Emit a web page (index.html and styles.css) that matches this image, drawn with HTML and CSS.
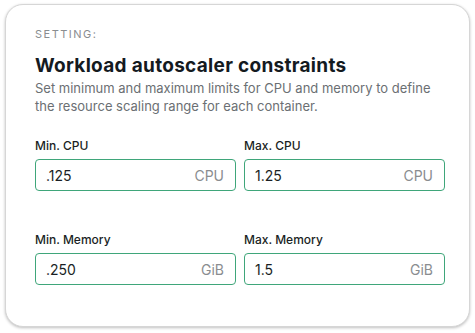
FILE: index.html
```html
<!DOCTYPE html>
<html lang="en">
<head>
    <meta charset="UTF-8">
    <title>Workload autoscaler constraints</title>
    <link rel="stylesheet" href="styles.css">
</head>
<body>
    <div class="card">
        <div class="eyebrow">SETTING:</div>
        <div class="title">Workload autoscaler constraints</div>
        <div class="desc">Set minimum and maximum limits for CPU and memory to define the resource scaling range for each container.</div>

        <div class="fields">
            <div class="field">
                <label class="label">Min. CPU</label>
                <div class="input"><span class="value">.125</span><span class="unit">CPU</span></div>
            </div>
            <div class="field">
                <label class="label">Max. CPU</label>
                <div class="input"><span class="value">1.25</span><span class="unit">CPU</span></div>
            </div>
            <div class="field">
                <label class="label">Min. Memory</label>
                <div class="input"><span class="value">.250</span><span class="unit">GiB</span></div>
            </div>
            <div class="field">
                <label class="label">Max. Memory</label>
                <div class="input"><span class="value">1.5</span><span class="unit">GiB</span></div>
            </div>
        </div>
    </div>
</body>
</html>
```

FILE: styles.css
```css
body {
    margin: 0;
    background: #ffffff;
    font-family: 'Inter', 'Noto Sans', sans-serif;
    color: #1a1f24;
}
.card {
    margin: 4px 5px;
    width: 465px;
    height: 323px;
    box-sizing: border-box;
    padding: 21px 29px;
    border: 1px solid #d6d6d6;
    border-radius: 18px;
    box-shadow: 0 1px 3px rgba(0, 0, 0, 0.25);
    background: #ffffff;
}
.eyebrow {
    font-size: 11px;
    letter-spacing: 1.5px;
    color: #8a8d90;
    line-height: 16px;
}
.title {
    margin-top: 12px;
    font-size: 19px;
    letter-spacing: 0.3px;
    font-weight: 700;
    line-height: 24px;
    color: #141a1f;
}
.desc {
    margin-top: 1px;
    font-size: 13px;
    line-height: 18px;
    color: #6b6f73;
}
.fields {
    margin-top: 23px;
    display: grid;
    grid-template-columns: 201px 201px;
    column-gap: 8px;
    row-gap: 41px;
}
.field {
    display: flex;
    flex-direction: column;
}
.label {
    font-size: 12px;
    line-height: 16px;
    font-weight: 500;
    margin-bottom: 5px;
}
.input {
    height: 32px;
    box-sizing: border-box;
    border: 1px solid #3fa67a;
    border-radius: 4px;
    display: flex;
    align-items: center;
    justify-content: space-between;
    padding: 0 11px 0 10px;
    font-size: 14px;
}
.value {
    color: #1a1f24;
}
.unit {
    color: #8a8d90;
}
```
